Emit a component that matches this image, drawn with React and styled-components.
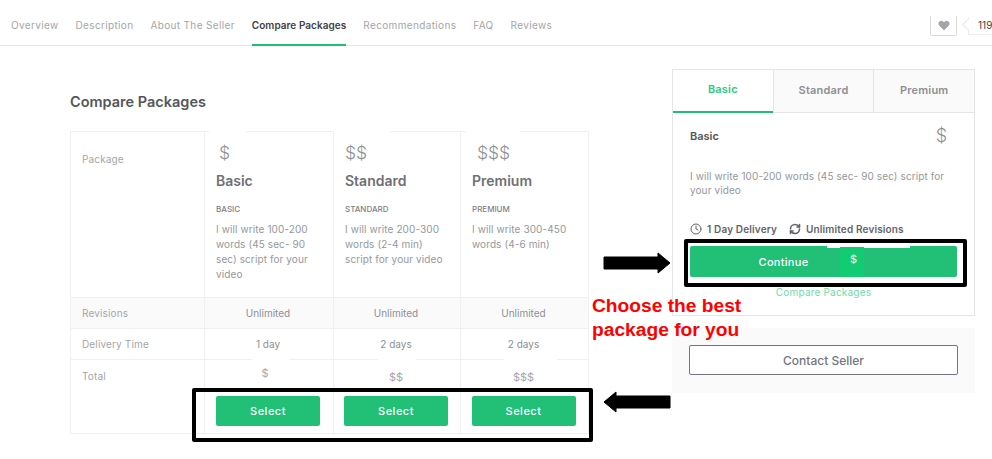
import React from 'react'
import styled, { createGlobalStyle } from 'styled-components'
import { Clock, RefreshCw } from 'lucide-react'

const Global = createGlobalStyle`
  html, body { margin: 0; padding: 0; background: #fff; }
  body { font-family: Inter, "Noto Sans", sans-serif; color: #74767e; overflow: hidden; }
  * { box-sizing: border-box; }
`

const Page = styled.div`
  position: relative;
  width: 992px;
  height: 459px;
  overflow: hidden;
`

const Nav = styled.div`
  display: flex;
  align-items: stretch;
  height: 46px;
  padding-left: 11px;
  border-bottom: 1px solid #e4e5e7;
`

const NavItem = styled.div`
  display: flex;
  align-items: center;
  height: 46px;
  padding-top: 6px;
  margin-right: 17px;
  font-size: 10px;
  letter-spacing: ${p => (p.$active ? '0.05px' : '0.35px')};
  font-weight: ${p => (p.$active ? 600 : 400)};
  color: ${p => (p.$active ? '#404145' : '#a3a5aa')};
  border-bottom: 2px solid ${p => (p.$active ? '#1dbf73' : 'transparent')};
`

const NavRight = styled.div`
  margin-left: auto;
  display: flex;
  align-items: flex-start;
`

const Heart = styled.div`
  width: 27px;
  height: 20px;
  margin-top: 16px;
  display: flex;
  align-items: center;
  justify-content: center;
  border: 1px solid #dadbdd;
  border-top: none;
  border-radius: 0 0 2px 2px;
`

const Count = styled.div`
  position: relative;
  margin: 17px 0 0 11px;
  width: 24px;
  height: 18px;
  padding: 1px 0 0 9px;
  font-size: 10px;
  line-height: 14px;
  color: #404145;
  white-space: nowrap;
  border-left: 1px solid #eeeef0;
  border-bottom: 1px solid #eeeef0;

  &::before {
    content: '';
    position: absolute;
    left: -5px;
    top: 3px;
    width: 8px;
    height: 8px;
    background: #fff;
    border-left: 1px solid #e4e5e7;
    border-bottom: 1px solid #e4e5e7;
    transform: rotate(45deg);
  }
`

const Body = styled.div`
  display: flex;
  align-items: flex-start;
`

const Left = styled.div`
  width: 672px;
  padding: 47px 0 0 70px;
`

const Heading = styled.div`
  font-size: 14.5px;
  font-weight: 600;
  color: #55565a;
  height: 38px;
`

const Table = styled.div`
  width: 519px;
  display: grid;
  grid-template-columns: 133px 129px 127px 128px;
  grid-template-rows: 165px 31px 31px 74px;
  border: 1px solid #f0f0f2;
`

const Cell = styled.div`
  position: relative;
  border-left: ${p => (p.$first ? 'none' : '1px solid #f0f0f2')};
  border-top: ${p => (p.$top ? 'none' : '1px solid #f0f0f2')};
  background: ${p => (p.$shade ? '#fafafa' : '#fff')};
  font-size: 10px;
  color: #8d8f94;
`

const RowLabel = styled(Cell)`
  padding: ${p => p.$pad || '9px'} 0 0 11px;
  letter-spacing: 0.15px;
  color: #a3a5aa;
`

const ValueCell = styled(Cell)`
  padding: 9px 2px 0 0;
  text-align: center;
`

const PackCell = styled(Cell)`
  padding: 9px 13px 0 11px;

  &::before {
    content: '';
    position: absolute;
    top: -1px;
    left: ${p => p.$gapLeft}px;
    width: ${p => p.$gapWidth}px;
    height: 1px;
    background: #fff;
  }
`

const Dollars = styled.div`
  font-size: 17.5px;
  font-weight: 300;
  line-height: 24px;
  color: #8d8f94;
  padding-left: ${p => p.$indent}px;
`

const PackName = styled.div`
  margin-top: 7px;
  font-size: 14px;
  font-weight: 600;
  color: #6f7075;
`

const PackTag = styled.div`
  margin-top: 15px;
  font-size: 8px;
  font-weight: 500;
  color: #7f8085;
`

const PackText = styled.div`
  margin-top: 8px;
  font-size: 10px;
  letter-spacing: 0.1px;
  line-height: 15px;
  color: #95979c;
`

const TotalCell = styled(Cell)`
  text-align: center;
  padding: 6px 12px 0 10px;
  font-size: 11px;
  color: #a3a5aa;

  &::before {
    content: '';
    position: absolute;
    top: -1px;
    left: ${p => p.$gapLeft}px;
    width: ${p => p.$gapWidth}px;
    height: 1px;
    background: #fff;
  }
`

const TotalPrice = styled.div`
  height: 30px;
  padding-top: ${p => p.$drop}px;
  padding-right: ${p => p.$shift}px;
`

const SelectButton = styled.div`
  height: 30px;
  width: 104px;
  margin: 0 auto;
  display: flex;
  align-items: center;
  justify-content: center;
  border-radius: 2px;
  background: #21c076;
  color: #fff;
  font-size: 11px;
  font-weight: 500;
  letter-spacing: 0.5px;
`

const Side = styled.div`
  width: 303px;
  padding-top: 23px;
`

const Card = styled.div`
  height: 247px;
  border: 1px solid #e4e5e7;
`

const Tabs = styled.div`
  display: flex;
  height: 43px;
`

const Tab = styled.div`
  flex: 1;
  display: flex;
  align-items: center;
  justify-content: center;
  padding-bottom: 3px;
  font-size: 11px;
  font-weight: 600;
  letter-spacing: 0.2px;
  color: ${p => (p.$active ? '#2fc97f' : '#8d8f94')};
  background: ${p => (p.$active ? '#fff' : '#fafafa')};
  border-left: ${p => (p.$active ? 'none' : '1px solid #e4e5e7')};
  border-bottom: ${p => (p.$active ? '2px solid #1dbf73' : '1px solid #e4e5e7')};
`

const CardBody = styled.div`
  padding: 12px 17px 0;
`

const CardTitle = styled.div`
  display: flex;
  justify-content: space-between;
  align-items: center;
  font-size: 11px;
  font-weight: 600;
  color: #55565a;
`

const CardDollar = styled.span`
  font-size: 18px;
  font-weight: 300;
  color: #8d8f94;
  padding-right: 10px;
`

const CardText = styled.div`
  margin-top: 23px;
  font-size: 10px;
  line-height: 14px;
  letter-spacing: 0.1px;
  color: #95979c;
`

const Meta = styled.div`
  display: flex;
  align-items: center;
  gap: 12px;
  margin-top: 26px;
  font-size: 10px;
  font-weight: 600;
  letter-spacing: 0.15px;
  color: #62646a;
`

const MetaItem = styled.span`
  display: flex;
  align-items: center;
  gap: 5px;
`

const ContinueButton = styled.div`
  position: relative;
  margin-top: 11px;
  height: 31px;
  display: flex;
  align-items: center;
  justify-content: center;
  border-radius: 2px;
  background: #21c076;
  color: #fff;
  font-size: 11px;
  font-weight: 500;
  letter-spacing: 0.3px;
  padding-right: 80px;

  &::before {
    content: '';
    position: absolute;
    left: 137px;
    top: 0;
    width: 83px;
    height: 2px;
    background: #fff;
  }
`

const ContinueDollar = styled.span`
  position: absolute;
  left: 150px;
  top: 1px;
  width: 24px;
  height: 30px;
  padding: 5px 0 0 10px;
  background: #12cc74;
  font-size: 11px;
  font-weight: 400;
`

const CompareLink = styled.div`
  margin-top: 9px;
  text-align: center;
  font-size: 10px;
  letter-spacing: 0.2px;
  color: #6fdca6;
`

const ContactBox = styled.div`
  margin-top: 12px;
  height: 65px;
  padding: 17px;
  background: #fafafa;
`

const ContactButton = styled.div`
  height: 30px;
  display: flex;
  align-items: center;
  justify-content: center;
  border: 1px solid #74767e;
  border-radius: 2px;
  background: #fff;
  font-size: 12px;
  font-weight: 500;
  color: #74767e;
`

const Callout = styled.div`
  position: absolute;
  left: ${p => p.$x}px;
  top: ${p => p.$y}px;
  width: ${p => p.$w}px;
  height: ${p => p.$h}px;
  border: 4px solid #000;
  border-radius: 2px;
`

const Note = styled.div`
  position: absolute;
  left: 592px;
  top: 294px;
  font-family: "Liberation Sans", Arial, sans-serif;
  font-size: 19.2px;
  font-weight: 700;
  line-height: 24px;
  color: #f00;
`

const Arrow = styled.svg`
  position: absolute;
  left: ${p => p.$x}px;
  top: ${p => p.$y}px;
`

const packs = [
  { dollars: '$', indent: 3, name: 'Basic', text: 'I will write 100-200 words (45 sec- 90 sec) script for your video', time: '1 day', drop: 0, shift: 6, top: [4, 37], total: [47, 37] },
  { dollars: '$$', indent: 0, name: 'Standard', text: 'I will write 200-300 words (2-4 min) script for your video', time: '2 days', drop: 4, shift: 0, top: [0, 56], total: [44, 38] },
  { dollars: '$$$', indent: 5, name: 'Premium', text: 'I will write 300-450 words (4-6 min)', time: '2 days', drop: 4, shift: 0, top: [5, 54], total: [43, 53] },
]

const navItems = ['Overview', 'Description', 'About The Seller', 'Compare Packages', 'Recommendations', 'FAQ', 'Reviews']

export default function App() {
  return (
    <Page>
      <Global />
      <Nav>
        {navItems.map(n => (
          <NavItem key={n} $active={n === 'Compare Packages'}>{n}</NavItem>
        ))}
        <NavRight>
          <Heart>
            <svg width="12" height="11" viewBox="0 0 24 22" fill="#a3a5aa">
              <path d="M12 21 2.8 11.6C.2 9 .4 5 3 2.9c2.4-1.900 5.900-1.500 8 .7l1 1.100 1-1.100c2.100-2.200 5.600-2.600 8-.7 2.600 2.100 2.800 6.100.2 8.700z" />
            </svg>
          </Heart>
          <Count>119</Count>
        </NavRight>
      </Nav>
      <Body>
        <Left>
          <Heading>Compare Packages</Heading>
          <Table>
            <RowLabel $first $top $pad="21px">Package</RowLabel>
            {packs.map(p => (
              <PackCell key={p.name} $top $gapLeft={p.top[0]} $gapWidth={p.top[1]}>
                <Dollars $indent={p.indent}>{p.dollars}</Dollars>
                <PackName>{p.name}</PackName>
                <PackTag>{p.name.toUpperCase()}</PackTag>
                <PackText>{p.text}</PackText>
              </PackCell>
            ))}
            <RowLabel $first $shade>Revisions</RowLabel>
            {packs.map(p => <ValueCell key={p.name} $shade>Unlimited</ValueCell>)}
            <RowLabel $first>Delivery Time</RowLabel>
            {packs.map(p => <ValueCell key={p.name}>{p.time}</ValueCell>)}
            <RowLabel $first $pad="10px">Total</RowLabel>
            {packs.map(p => (
              <TotalCell key={p.name} $gapLeft={p.total[0]} $gapWidth={p.total[1]}>
                <TotalPrice $drop={p.drop} $shift={p.shift}>{p.dollars}</TotalPrice>
                <SelectButton>Select</SelectButton>
              </TotalCell>
            ))}
          </Table>
        </Left>
        <Side>
          <Card>
            <Tabs>
              <Tab $active>Basic</Tab>
              <Tab>Standard</Tab>
              <Tab>Premium</Tab>
            </Tabs>
            <CardBody>
              <CardTitle>Basic<CardDollar>$</CardDollar></CardTitle>
              <CardText>I will write 100-200 words (45 sec- 90 sec) script for your video</CardText>
              <Meta>
                <MetaItem><Clock size={12} strokeWidth={2} />1 Day Delivery</MetaItem>
                <MetaItem><RefreshCw size={12} strokeWidth={3.2} />Unlimited Revisions</MetaItem>
              </Meta>
              <ContinueButton>Continue<ContinueDollar>$</ContinueDollar></ContinueButton>
              <CompareLink>Compare Packages</CompareLink>
            </CardBody>
          </Card>
          <ContactBox>
            <ContactButton>Contact Seller</ContactButton>
          </ContactBox>
        </Side>
      </Body>
      <Callout $x={684} $y={239} $w={283} $h={48} />
      <Callout $x={192} $y={388} $w={401} $h={54} />
      <Note>Choose the best<br />package for you</Note>
      <Arrow $x={603} $y={252} width="68" height="22" viewBox="0 0 68 22">
        <path d="M1 5h54V1l12 10-12 10v-4H1z" fill="#000" stroke="#000" strokeLinejoin="round" />
      </Arrow>
      <Arrow $x={603} $y={391} width="68" height="22" viewBox="0 0 68 22">
        <path d="M67 5H13V1L1 11l12 10v-4h54z" fill="#000" stroke="#000" strokeLinejoin="round" />
      </Arrow>
    </Page>
  )
}
